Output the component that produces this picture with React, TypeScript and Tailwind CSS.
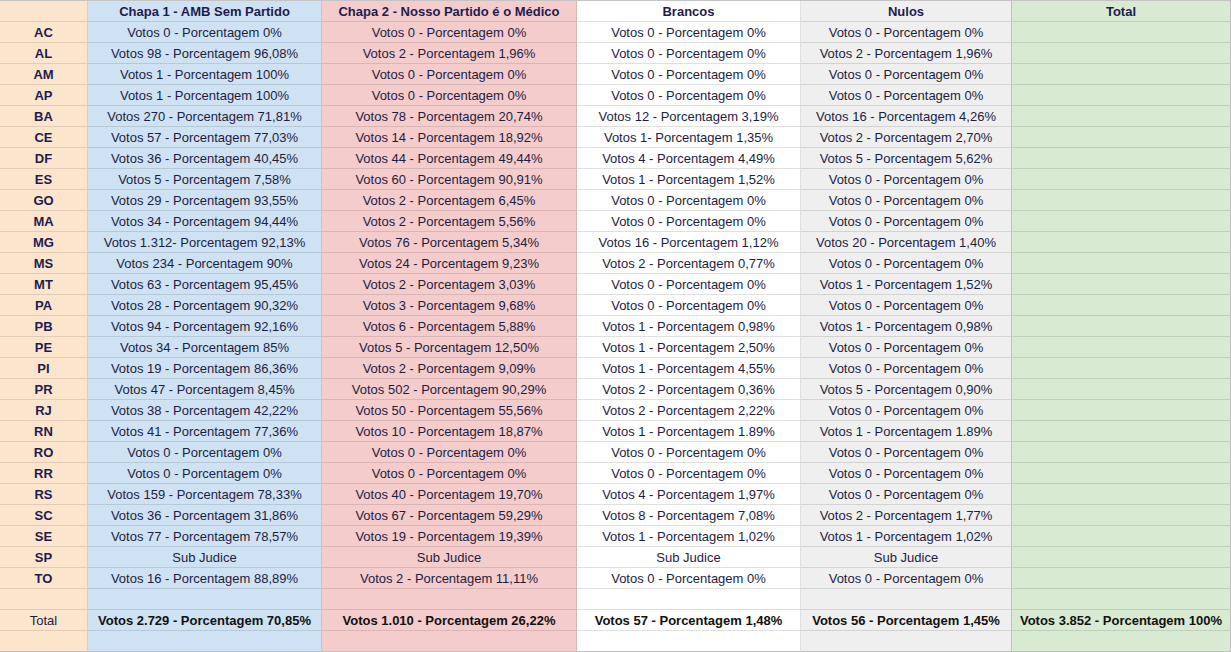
import React from "react";

const Z = "Votos 0 - Porcentagem 0%";
const SJ = "Sub Judice";

const rows: [string, string, string, string, string][] = [
  ["AC", Z, Z, Z, Z],
  ["AL", "Votos 98 - Porcentagem 96,08%", "Votos 2 - Porcentagem 1,96%", Z, "Votos 2 - Porcentagem 1,96%"],
  ["AM", "Votos 1 - Porcentagem 100%", Z, Z, Z],
  ["AP", "Votos 1 - Porcentagem 100%", Z, Z, Z],
  ["BA", "Votos 270 - Porcentagem 71,81%", "Votos 78 - Porcentagem 20,74%", "Votos 12 - Porcentagem 3,19%", "Votos 16 - Porcentagem 4,26%"],
  ["CE", "Votos 57 - Porcentagem 77,03%", "Votos 14 - Porcentagem 18,92%", "Votos 1- Porcentagem 1,35%", "Votos 2 - Porcentagem 2,70%"],
  ["DF", "Votos 36 - Porcentagem 40,45%", "Votos 44 - Porcentagem 49,44%", "Votos 4 - Porcentagem 4,49%", "Votos 5 - Porcentagem 5,62%"],
  ["ES", "Votos 5 - Porcentagem 7,58%", "Votos 60 - Porcentagem 90,91%", "Votos 1 - Porcentagem 1,52%", Z],
  ["GO", "Votos 29 - Porcentagem 93,55%", "Votos 2 - Porcentagem 6,45%", Z, Z],
  ["MA", "Votos 34 - Porcentagem 94,44%", "Votos 2 - Porcentagem 5,56%", Z, Z],
  ["MG", "Votos 1.312- Porcentagem 92,13%", "Votos 76 - Porcentagem 5,34%", "Votos 16 - Porcentagem 1,12%", "Votos 20 - Porcentagem 1,40%"],
  ["MS", "Votos 234 - Porcentagem 90%", "Votos 24 - Porcentagem 9,23%", "Votos 2 - Porcentagem 0,77%", Z],
  ["MT", "Votos 63 - Porcentagem 95,45%", "Votos 2 - Porcentagem 3,03%", Z, "Votos 1 - Porcentagem 1,52%"],
  ["PA", "Votos 28 - Porcentagem 90,32%", "Votos 3 - Porcentagem 9,68%", Z, Z],
  ["PB", "Votos 94 - Porcentagem 92,16%", "Votos 6 - Porcentagem 5,88%", "Votos 1 - Porcentagem 0,98%", "Votos 1 - Porcentagem 0,98%"],
  ["PE", "Votos 34 - Porcentagem 85%", "Votos 5 - Porcentagem 12,50%", "Votos 1 - Porcentagem 2,50%", Z],
  ["PI", "Votos 19 - Porcentagem 86,36%", "Votos 2 - Porcentagem 9,09%", "Votos 1 - Porcentagem 4,55%", Z],
  ["PR", "Votos 47 - Porcentagem 8,45%", "Votos 502 - Porcentagem 90,29%", "Votos 2 - Porcentagem 0,36%", "Votos 5 - Porcentagem 0,90%"],
  ["RJ", "Votos 38 - Porcentagem 42,22%", "Votos 50 - Porcentagem 55,56%", "Votos 2 - Porcentagem 2,22%", Z],
  ["RN", "Votos 41 - Porcentagem 77,36%", "Votos 10 - Porcentagem 18,87%", "Votos 1 - Porcentagem 1.89%", "Votos 1 - Porcentagem 1.89%"],
  ["RO", Z, Z, Z, Z],
  ["RR", Z, Z, Z, Z],
  ["RS", "Votos 159 - Porcentagem 78,33%", "Votos 40 - Porcentagem 19,70%", "Votos 4 - Porcentagem 1,97%", Z],
  ["SC", "Votos 36 - Porcentagem 31,86%", "Votos 67 - Porcentagem 59,29%", "Votos 8 - Porcentagem 7,08%", "Votos 2 - Porcentagem 1,77%"],
  ["SE", "Votos 77 - Porcentagem 78,57%", "Votos 19 - Porcentagem 19,39%", "Votos 1 - Porcentagem 1,02%", "Votos 1 - Porcentagem 1,02%"],
  ["SP", SJ, SJ, SJ, SJ],
  ["TO", "Votos 16 - Porcentagem 88,89%", "Votos 2 - Porcentagem 11,11%", Z, Z],
];

const colCls = [
  "bg-[#fce5cd] border-[#e3cdb8]",
  "bg-[#cfe2f3] border-[#b7c8d8]",
  "bg-[#f4cccc] border-[#d9b5b5]",
  "bg-white border-[#e0e0e0]",
  "bg-[#efefef] border-[#d3d3d3]",
  "bg-[#d9ead3] border-[#c1d0bc]",
];

const rightCls = [
  "border-r-[#e3cdb8]",
  "border-r-[#b7c8d8]",
  "border-r-[#d9b5b5]",
  "border-r-[#e0e0e0]",
  "border-r-[#c0c0c0]",
  "border-r-[#c0c0c0]",
];

function Cell({ col, children, cls = "" }: { col: number; children?: React.ReactNode; cls?: string }) {
  return (
    <div
      className={`h-[21px] border-b border-r ${colCls[col]} ${rightCls[col]} flex items-center justify-center whitespace-nowrap overflow-hidden text-[13px] leading-none ${cls}`}
    >
      {children}
    </div>
  );
}

export default function App() {
  const headers = ["", "Chapa 1 - AMB Sem Partido", "Chapa 2 - Nosso Partido é o Médico", "Brancos", "Nulos", "Total"];
  return (
    <div
      className="w-[1231px] h-[652px] overflow-hidden bg-white"
      style={{ fontFamily: '"Liberation Sans", Arial, sans-serif' }}
    >
      <div className="grid grid-cols-[88px_234px_255px_224px_211px_219px] border-t border-[#c4c4c4]">
        {headers.map((h, i) => (
          <Cell key={"h" + i} col={i} cls="font-bold text-[#1e1b4f]">
            {h}
          </Cell>
        ))}
        {rows.map((r) => (
          <React.Fragment key={r[0]}>
            <Cell col={0} cls="font-bold text-[#1e1b4f]">{r[0]}</Cell>
            <Cell col={1} cls="text-[#1d1d3f]">{r[1]}</Cell>
            <Cell col={2} cls="text-[#1d1d3f]">{r[2]}</Cell>
            <Cell col={3} cls="text-[#1d1d3f]">{r[3]}</Cell>
            <Cell col={4} cls="text-[#1d1d3f]">{r[4]}</Cell>
            <Cell col={5} />
          </React.Fragment>
        ))}
        {[0, 1, 2, 3, 4, 5].map((i) => (
          <Cell key={"e1" + i} col={i} />
        ))}
        <Cell col={0} cls="text-[#1d1d3f]">Total</Cell>
        <Cell col={1} cls="font-bold text-[#111]">Votos 2.729 - Porcentagem 70,85%</Cell>
        <Cell col={2} cls="font-bold text-[#111]">Votos 1.010 - Porcentagem 26,22%</Cell>
        <Cell col={3} cls="font-bold text-[#111]">Votos 57 - Porcentagem 1,48%</Cell>
        <Cell col={4} cls="font-bold text-[#111]">Votos 56 - Porcentagem 1,45%</Cell>
        <Cell col={5} cls="font-bold text-[#111]">Votos 3.852 - Porcentagem 100%</Cell>
        {[0, 1, 2, 3, 4, 5].map((i) => (
          <Cell key={"e2" + i} col={i} cls="border-b-[#c0c0c0]" />
        ))}
      </div>
    </div>
  );
}
